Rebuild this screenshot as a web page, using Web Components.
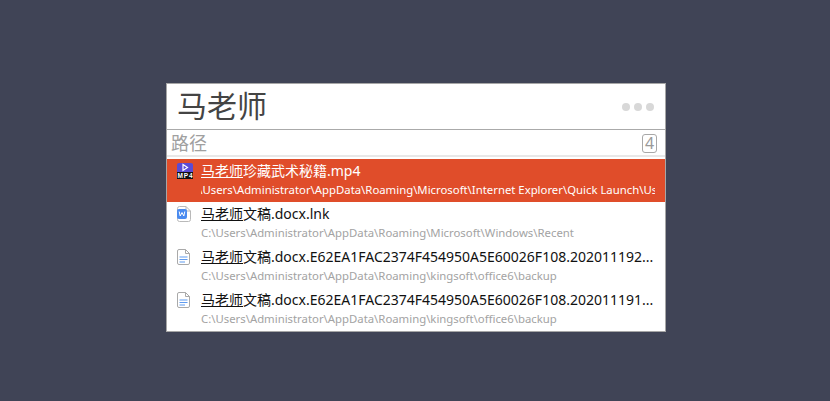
<!DOCTYPE html>
<html>
<head>
<meta charset="utf-8">
<style>
html,body{margin:0;height:100%;background:#404456;}
body{font-family:"Noto Sans","Noto Sans CJK SC",sans-serif;overflow:hidden;}
</style>
</head>
<body>
<search-window query="马老师" count="4">
  <result-row selected icon="mp4" path="C:\Users\Administrator\AppData\Roaming\Microsoft\Internet Explorer\Quick Launch\Us"><u>马老师</u>珍藏武术秘籍.mp4</result-row>
  <result-row icon="word" path="C:\Users\Administrator\AppData\Roaming\Microsoft\Windows\Recent"><u>马老师</u>文稿.docx.lnk</result-row>
  <result-row icon="doc" path="C:\Users\Administrator\AppData\Roaming\kingsoft\office6\backup"><u>马老师</u>文稿.docx.E62EA1FAC2374F454950A5E60026F108.202011192...</result-row>
  <result-row icon="doc" path="C:\Users\Administrator\AppData\Roaming\kingsoft\office6\backup"><u>马老师</u>文稿.docx.E62EA1FAC2374F454950A5E60026F108.202011191...</result-row>
</search-window>

<script>
const icons = {
  mp4: `<svg width="16" height="16" viewBox="0 0 16 16">
    <path d="M2 0h12a2 2 0 0 1 2 2v7H0V2a2 2 0 0 1 2-2z" fill="#5b4bd6"/>
    <path d="M6 1.500l4.500 3-4.500 3z" fill="none" stroke="#fff" stroke-width="1.200"/>
    <rect y="9" width="16" height="7" fill="#111"/>
    <text x="8" y="15" text-anchor="middle" font-family="Liberation Sans" font-weight="700" font-size="6.500" fill="#fff" textLength="15">MP4</text>
  </svg>`,
  word: `<svg width="14" height="16" viewBox="0 0 14 16">
    <path d="M2.500.5h6.500l4.500 4.500v8.500a2 2 0 0 1-2 2h-9a2 2 0 0 1-2-2v-11a2 2 0 0 1 2-2z" fill="#fff" stroke="#b9b9b9"/>
    <path d="M9 .5v4.500h4.500" fill="none" stroke="#b9b9b9"/>
    <rect x="0" y="3" width="10" height="10" rx="2" fill="#4a8bf0"/>
    <path d="M2.200 5.500l1 4.500 1.800-3.500 1.800 3.500 1-4.500" fill="none" stroke="#fff" stroke-width="1"/>
  </svg>`,
  doc: `<svg width="13" height="16" viewBox="0 0 13 16">
    <path d="M2 .5h6.500l4 4v9.500a1.500 1.500 0 0 1-1.500 1.500H2A1.500 1.500 0 0 1 .5 14V2A1.500 1.500 0 0 1 2 .5z" fill="#fff" stroke="#a9a9a9"/>
    <path d="M8.500 .5v4h4" fill="none" stroke="#a9a9a9"/>
    <path d="M2.500 8h8M2.500 10.500h8M2.500 13h5.500" stroke="#5f9bf0" stroke-width="1.200"/>
  </svg>`
};

class ResultRow extends HTMLElement {
  constructor() {
    super();
    this.attachShadow({ mode: 'open' });
    this.shadowRoot.innerHTML = `
    <style>
    :host{display:flex;height:43px;background:#fff;color:#111;}
    :host([selected]){background:#e04d2a;color:#fff;}
    .icon{flex:none;width:34px;padding:4px 0 0 10px;box-sizing:border-box;}
    .icon svg{display:block;}
    .text{flex:1;min-width:0;margin-right:10px;overflow:hidden;}
    .name{font-size:14px;line-height:20px;margin-top:2px;white-space:nowrap;overflow:hidden;}
    .path{font-size:11.35px;line-height:16px;margin-top:1px;color:#a3a3a3;white-space:nowrap;overflow:hidden;}
    :host([selected]) .path{color:#fff;}
    :host([selected]) .path span{margin-left:-13px;display:inline-block;}
    </style>
    <div class="icon"></div>
    <div class="text">
      <div class="name"><slot></slot></div>
      <div class="path"><span></span></div>
    </div>`;
  }
  connectedCallback() {
    this.shadowRoot.querySelector('.icon').innerHTML = icons[this.getAttribute('icon')];
    this.shadowRoot.querySelector('.path span').textContent = this.getAttribute('path');
  }
}

class SearchWindow extends HTMLElement {
  constructor() {
    super();
    this.attachShadow({ mode: 'open' });
    this.shadowRoot.innerHTML = `
    <style>
    :host{display:block;position:absolute;left:166px;top:83px;width:500px;height:249px;box-sizing:border-box;
      background:#fff;border:1px solid #a6a6a6;}
    header{display:flex;align-items:center;justify-content:space-between;height:45px;border-bottom:1px solid #aaa;padding:0 11px 0 10px;}
    h1{margin:-2px 0 0;font-size:30px;font-weight:400;color:#444;line-height:45px;}
    .dots{display:flex;gap:4px;}
    .dots i{width:8px;height:8px;border-radius:50%;background:#d8d8d8;}
    .bar{display:flex;align-items:center;justify-content:space-between;height:25px;padding:0 8px 0 4px;
      border-bottom:2px solid #e8e8e8;margin-bottom:2px;}
    .bar span{font-size:18px;color:#a0a0a0;line-height:25px;margin-top:2px;}
    .bar b{box-sizing:border-box;width:15px;height:19px;margin-top:2px;border:1px solid #a8a8a8;border-radius:3px;
      font-weight:400;font-size:16px;line-height:17px;text-align:center;color:#999;}
    </style>
    <header><h1></h1><div class="dots"><i></i><i></i><i></i></div></header>
    <div class="bar"><span>路径</span><b></b></div>
    <slot></slot>`;
  }
  connectedCallback() {
    this.shadowRoot.querySelector('h1').textContent = this.getAttribute('query');
    this.shadowRoot.querySelector('b').textContent = this.getAttribute('count');
  }
}

customElements.define('result-row', ResultRow);
customElements.define('search-window', SearchWindow);
</script>
</body>
</html>
